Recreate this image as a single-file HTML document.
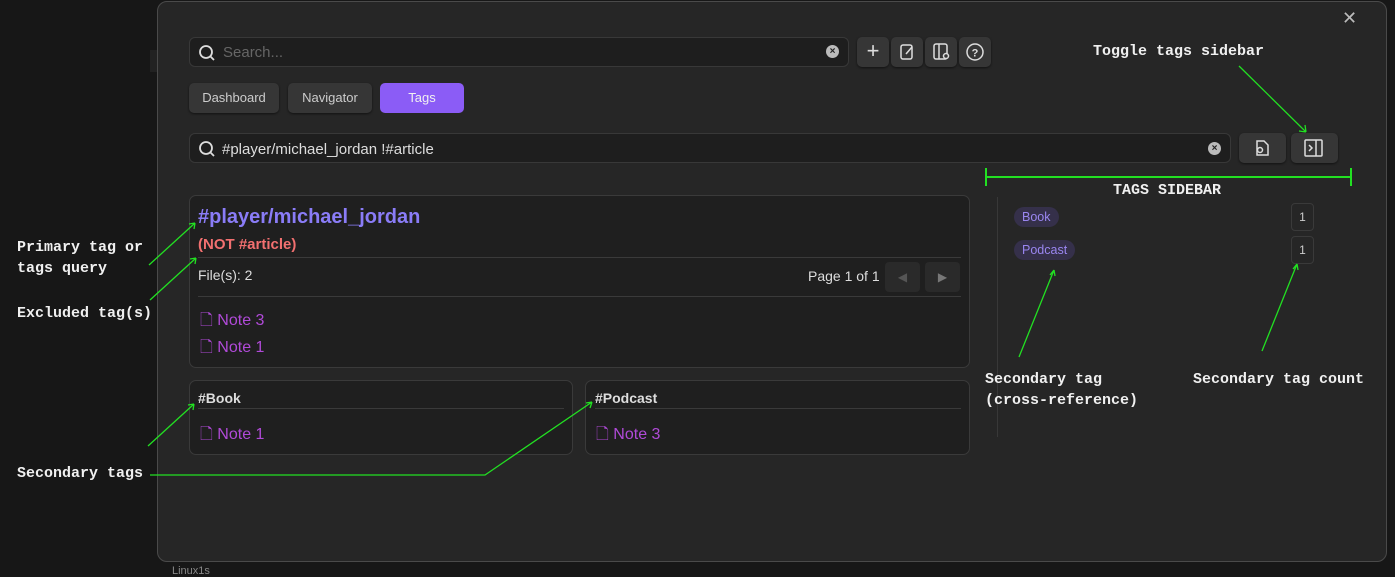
<!DOCTYPE html>
<html><head><meta charset="utf-8"><style>
*{box-sizing:border-box;margin:0;padding:0}
body{width:1395px;height:573px;background:#171717;position:relative;overflow:hidden;font-family:"Liberation Sans",sans-serif;color:#ddd}
.a{position:absolute}
.modal{left:157px;top:1px;width:1230px;height:561px;background:#262626;border:1px solid #4a4a4a;border-radius:10px}
.inp{background:#1e1e1e;border:1px solid #383838;border-radius:6px}
.btn{background:#363636;border-radius:5px;box-shadow:0 1px 2px #0008}
.mono{font-family:"Liberation Mono","DejaVu Sans Mono",monospace;color:#f0f0f0;font-size:15px;font-weight:bold;line-height:21px}
.card{background:#1f1f1f;border:1px solid #3a3a3a;border-radius:7px}
.note{color:#b04ad8;font-size:16px}
.hr{height:1px;background:#3a3a3a}
.pill{background:#35304a;color:#9a86f0;font-size:12.5px;border-radius:10px;padding:3px 8px}
.cnt{border:1px solid #3a3a3a;border-radius:4px;font-size:12px;color:#ccc;width:23px;height:28px;text-align:center;line-height:26px}
</style></head><body>
<div class="a" style="left:150px;top:50px;width:8px;height:22px;background:#222"></div>
<div class="a modal"></div>
<div class="a" style="left:1342px;top:8px;color:#bbb;font-size:18px">✕</div>
<div class="a inp" style="left:189px;top:37px;width:660px;height:30px"></div>
<svg class="a" style="left:198px;top:44px" width="18" height="18"><circle cx="8" cy="8" r="6" fill="none" stroke="#ddd" stroke-width="1.8"/><line x1="12.5" y1="12.5" x2="16" y2="16" stroke="#ddd" stroke-width="1.8"/></svg>
<div class="a" style="left:223px;top:44px;color:#666;font-size:15px">Search...</div>
<div class="a" style="left:826px;top:45px;width:13px;height:13px;border-radius:50%;background:#bbb;color:#222;font-size:10px;text-align:center;line-height:13px;font-weight:bold">×</div>
<div class="a btn" style="left:857px;top:37px;width:32px;height:30px;color:#ddd;font-size:22px;text-align:center;line-height:28px">+</div>
<div class="a btn" style="left:891px;top:37px;width:32px;height:30px"><svg width="32" height="30"><rect x="10" y="8" width="11" height="14" rx="2" fill="none" stroke="#ddd" stroke-width="1.5"/><path d="M15 17l6-7" stroke="#ddd" stroke-width="1.5"/></svg></div>
<div class="a btn" style="left:925px;top:37px;width:32px;height:30px"><svg width="32" height="30"><rect x="9" y="7" width="13" height="15" rx="2" fill="none" stroke="#ddd" stroke-width="1.5"/><line x1="14" y1="7" x2="14" y2="22" stroke="#ddd" stroke-width="1.5"/><circle cx="21" cy="19" r="2.5" fill="#363636" stroke="#ddd" stroke-width="1.5"/></svg></div>
<div class="a btn" style="left:959px;top:37px;width:32px;height:30px"><svg width="32" height="30"><circle cx="16" cy="15" r="8" fill="none" stroke="#ddd" stroke-width="1.5"/><text x="16" y="19.5" font-size="11" fill="#ddd" text-anchor="middle" font-family="Liberation Sans" font-weight="bold">?</text></svg></div>
<div class="a btn" style="left:189px;top:83px;width:90px;height:30px;font-size:13px;line-height:30px;text-align:center;color:#ccc">Dashboard</div>
<div class="a btn" style="left:288px;top:83px;width:84px;height:30px;font-size:13px;line-height:30px;text-align:center;color:#ccc">Navigator</div>
<div class="a" style="left:380px;top:83px;width:84px;height:30px;font-size:13px;line-height:30px;text-align:center;color:#f0f0f0;background:#8b5cf6;border-radius:5px">Tags</div>
<div class="a inp" style="left:189px;top:133px;width:1042px;height:30px"></div>
<svg class="a" style="left:198px;top:140px" width="18" height="18"><circle cx="8" cy="8" r="6" fill="none" stroke="#ddd" stroke-width="1.8"/><line x1="12.5" y1="12.5" x2="16" y2="16" stroke="#ddd" stroke-width="1.8"/></svg>
<div class="a" style="left:222px;top:141px;color:#ddd;font-size:15px">#player/michael_jordan !#article</div>
<div class="a" style="left:1208px;top:142px;width:13px;height:13px;border-radius:50%;background:#bbb;color:#222;font-size:10px;text-align:center;line-height:13px;font-weight:bold">×</div>
<div class="a btn" style="left:1239px;top:133px;width:47px;height:30px"><svg width="47" height="30"><path d="M18 8h7l4 4v10h-11z" fill="none" stroke="#ddd" stroke-width="1.5"/><circle cx="21" cy="17" r="2.5" fill="none" stroke="#ddd" stroke-width="1.5"/></svg></div>
<div class="a btn" style="left:1291px;top:133px;width:47px;height:30px"><svg width="47" height="30"><rect x="14" y="7" width="17" height="16" rx="1" fill="none" stroke="#ddd" stroke-width="1.5"/><line x1="25" y1="7" x2="25" y2="23" stroke="#ddd" stroke-width="1.5"/><path d="M18 12l3 3-3 3" fill="none" stroke="#ddd" stroke-width="1.5"/></svg></div>

<div class="a card" style="left:189px;top:195px;width:781px;height:173px"></div>
<div class="a" style="left:198px;top:206px;color:#8a7cf7;font-size:20px;font-weight:bold">#player/michael_jordan</div>
<div class="a" style="left:198px;top:236px;color:#f27070;font-size:15px;font-weight:bold">(NOT #article)</div>
<div class="a hr" style="left:198px;top:257px;width:763px"></div>
<div class="a" style="left:198px;top:267px;font-size:14px;color:#ddd">File(s): 2</div>
<div class="a" style="left:808px;top:268px;font-size:14px;color:#ddd">Page 1 of 1</div>
<div class="a" style="left:885px;top:262px;width:35px;height:30px;background:#2a2a2a;border-radius:4px;color:#555;text-align:center;line-height:30px;font-size:12px">◀</div>
<div class="a" style="left:925px;top:262px;width:35px;height:30px;background:#2a2a2a;border-radius:4px;color:#777;text-align:center;line-height:30px;font-size:12px">▶</div>
<div class="a hr" style="left:198px;top:296px;width:763px"></div>
<div class="a note" style="left:200px;top:309px">🗋 Note 3</div>
<div class="a note" style="left:200px;top:336px">🗋 Note 1</div>

<div class="a card" style="left:189px;top:380px;width:384px;height:75px"></div>
<div class="a" style="left:198px;top:390px;font-size:14px;font-weight:bold;color:#ddd">#Book</div>
<div class="a hr" style="left:198px;top:408px;width:366px"></div>
<div class="a note" style="left:200px;top:423px">🗋 Note 1</div>
<div class="a card" style="left:585px;top:380px;width:385px;height:75px"></div>
<div class="a" style="left:595px;top:390px;font-size:14px;font-weight:bold;color:#ddd">#Podcast</div>
<div class="a hr" style="left:595px;top:408px;width:366px"></div>
<div class="a note" style="left:596px;top:423px">🗋 Note 3</div>

<div class="a" style="left:997px;top:197px;width:1px;height:240px;background:#383838"></div>
<div class="a pill" style="left:1014px;top:207px">Book</div>
<div class="a pill" style="left:1014px;top:240px">Podcast</div>
<div class="a cnt" style="left:1291px;top:203px">1</div>
<div class="a cnt" style="left:1291px;top:236px">1</div>

<div class="a mono" style="left:1093px;top:41px">Toggle tags sidebar</div>
<div class="a mono" style="left:1113px;top:180px">TAGS SIDEBAR</div>
<div class="a mono" style="left:17px;top:237px">Primary tag or<br>tags query</div>
<div class="a mono" style="left:17px;top:303px">Excluded tag(s)</div>
<div class="a mono" style="left:17px;top:463px">Secondary tags</div>
<div class="a mono" style="left:985px;top:369px">Secondary tag<br>(cross-reference)</div>
<div class="a mono" style="left:1193px;top:369px">Secondary tag count</div>

<svg class="a" style="left:0;top:0" width="1395" height="573" fill="none" stroke="#22e022" stroke-width="1.3">
<path d="M1239 66L1306 132M1306 132l-1-7M1306 132l-7-1"/>
<path d="M986 168v18M986 177h365M1351 168v18" stroke-width="2"/>
<path d="M149 265L195 223M195 223l-6 1M195 223l-1 6"/>
<path d="M150 300L196 258M196 258l-6 1M196 258l-1 6"/>
<path d="M148 446L194 404M194 404l-6 1M194 404l-1 6"/>
<path d="M150 475H485L592 402M592 402l-6 1M592 402l-2 6"/>
<path d="M1019 357L1054 270M1054 270l-4 5M1054 270l1 6"/>
<path d="M1262 351L1297 264M1297 264l-4 5M1297 264l1 6"/>
</svg>
<div class="a" style="left:172px;top:565px;font-size:11px;color:#888">Linux1s</div>
</body></html>
